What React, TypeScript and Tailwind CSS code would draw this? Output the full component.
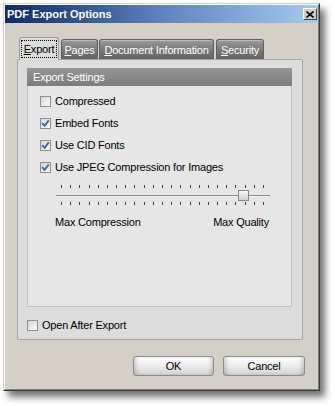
import React from 'react';

const ui = "font-['Liberation_Sans',Arial,sans-serif]";

function CheckBox({ checked }: { checked: boolean }) {
  return (
    <span className="flex h-[11px] w-[11px] shrink-0 items-center justify-center border border-[#8e8e8e] bg-gradient-to-br from-[#d6d6d6] to-[#fbfbfb]">
      {checked && (
        <svg width="9" height="9" viewBox="0 0 9 9">
          <path d="M1.2 4.2 L3.6 6.8 L7.8 1.4" stroke="#3f62c8" strokeWidth="1.9" fill="none" />
        </svg>
      )}
    </span>
  );
}

function Option({ label, checked }: { label: string; checked: boolean }) {
  return (
    <div className="flex h-[22px] items-center gap-[4px]">
      <CheckBox checked={checked} />
      <span className="leading-[13px] text-black">{label}</span>
    </div>
  );
}

function Tab({ first, rest, width, active }: { first: string; rest: string; width: number; active?: boolean }) {
  if (active) {
    return (
      <div
        className="relative z-10 -mb-px flex h-[23px] items-start justify-center rounded-t-[3px] border border-b-0 border-[#9c9c9c] bg-[#dcdcdc] px-[1px] pt-[2px]"
        style={{ width }}
      >
        <div className="flex h-[18px] w-full items-center justify-center border border-dotted border-black text-black">
          <span className="underline underline-offset-1">{first}</span>
          {rest}
        </div>
      </div>
    );
  }
  return (
    <div
      className="flex h-[20px] items-center justify-center rounded-t-[3px] border border-b-0 border-[#5e5e5e] bg-gradient-to-b from-[#9a9a9a] via-[#7a7a7a] to-[#626262] pt-[1px] text-white shadow-[inset_0_1px_0_rgba(255,255,255,0.35)]"
      style={{ width }}
    >
      <span className="underline underline-offset-1">{first}</span>
      {rest}
    </div>
  );
}

function Slider() {
  const ticks = Array.from({ length: 23 }, (_, i) => 9 + (i * 202) / 22);
  return (
    <svg width="220" height="24" viewBox="0 0 220 24" className="block">
      {ticks.map((x, i) => (
        <g key={i}>
          <rect x={Math.round(x)} y={2} width={1} height={3} fill="#3c3c3c" />
          <rect x={Math.round(x)} y={19} width={1} height={3} fill="#3c3c3c" />
        </g>
      ))}
      <rect x={4} y={12} width={214} height={1} fill="#8c8c8c" />
      <rect x={4} y={13} width={214} height={1} fill="#f4f4f4" />
      <defs>
        <linearGradient id="thumb" x1="0" y1="0" x2="0" y2="1">
          <stop offset="0" stopColor="#fafafa" />
          <stop offset="1" stopColor="#cfcfcf" />
        </linearGradient>
      </defs>
      <rect x={186.5} y={7.5} width={10} height={10} fill="url(#thumb)" stroke="#868686" />
    </svg>
  );
}

function Button({ label, width }: { label: string; width: number }) {
  return (
    <div
      className="flex h-[20px] items-center justify-center rounded-[3px] border border-[#8a8a8a] bg-gradient-to-b from-[#ffffff] via-[#ececec] to-[#d2d2d2] text-black shadow-[inset_4px_0_4px_-2px_rgba(0,0,0,0.18),inset_-4px_0_4px_-2px_rgba(0,0,0,0.18)]"
      style={{ width }}
    >
      {label}
    </div>
  );
}

export default function App() {
  return (
    <div className={`h-[406px] w-[335px] bg-white pl-[3px] pt-[3px] text-[11px] tracking-[-0.2px] ${ui}`}>
      <div className="h-[388px] w-[317px] border border-t-[#d4d0c8] border-l-[#d4d0c8] border-r-[#3a3a3a] border-b-[#3a3a3a] bg-[#d4d0c8] shadow-[5px_6px_7px_rgba(0,0,0,0.55)]">
        <div className="flex h-full flex-col border border-t-white border-l-white border-r-[#808080] border-b-[#808080]">
          {/* title bar */}
          <div className="flex h-[18px] items-center justify-between bg-gradient-to-r from-[#0c2a6e] via-[#5f83bd] to-[#a8caee] pl-[2px] pr-[1px]">
            <span className="text-[11px] font-bold tracking-normal text-white">PDF Export Options</span>
            <div className="flex h-[12px] w-[14px] items-center justify-center border border-t-white border-l-white border-r-[#404040] border-b-[#404040] bg-[#d4d0c8]">
              <svg width="8" height="7" viewBox="0 0 8 7">
                <path d="M0.5 0.5 L7.5 6.5 M7.5 0.5 L0.5 6.5" stroke="#000" strokeWidth="1.6" />
              </svg>
            </div>
          </div>

          {/* tabs + panel */}
          <div className="ml-[12px] mt-[14px] flex flex-col">
            <div className="flex items-end pl-[2px]">
              <Tab first="E" rest="xport" width={40} active />
              <div className="w-[2px]" />
              <Tab first="P" rest="ages" width={37} />
              <div className="w-[1px]" />
              <Tab first="D" rest="ocument Information" width={115} />
              <div className="w-[2px]" />
              <Tab first="S" rest="ecurity" width={48} />
            </div>
            <div className="flex h-[281px] w-[286px] flex-col rounded-[2px] border border-[#a6a6a6] bg-[#dcdcdc] px-[9px] pt-[8px]">
              <div className="flex h-[239px] w-[265px] flex-col border border-[#c2c2c2] bg-[#e6e6e6]">
                <div className="-mx-px -mt-px flex h-[18px] items-center bg-gradient-to-b from-[#959595] to-[#7c7c7c] pl-[6px] text-white">
                  Export Settings
                </div>
                <div className="flex flex-col pl-[12px] pt-[4px]">
                  <Option label="Compressed" checked={false} />
                  <Option label="Embed Fonts" checked />
                  <Option label="Use CID Fonts" checked />
                  <Option label="Use JPEG Compression for Images" checked />
                </div>
                <div className="ml-[24px] mt-[5px]">
                  <Slider />
                </div>
                <div className="ml-[27px] mt-[9px] flex w-[214px] justify-between leading-[13px] text-black">
                  <span>Max Compression</span>
                  <span>Max Quality</span>
                </div>
              </div>
              <div className="mt-[12px] flex items-center gap-[4px]">
                <CheckBox checked={false} />
                <span className="leading-[13px] text-black">Open After Export</span>
              </div>
            </div>
          </div>

          {/* buttons */}
          <div className="mt-[16px] flex justify-end gap-[9px] pr-[13px]">
            <Button label="OK" width={81} />
            <Button label="Cancel" width={82} />
          </div>
        </div>
      </div>
    </div>
  );
}
